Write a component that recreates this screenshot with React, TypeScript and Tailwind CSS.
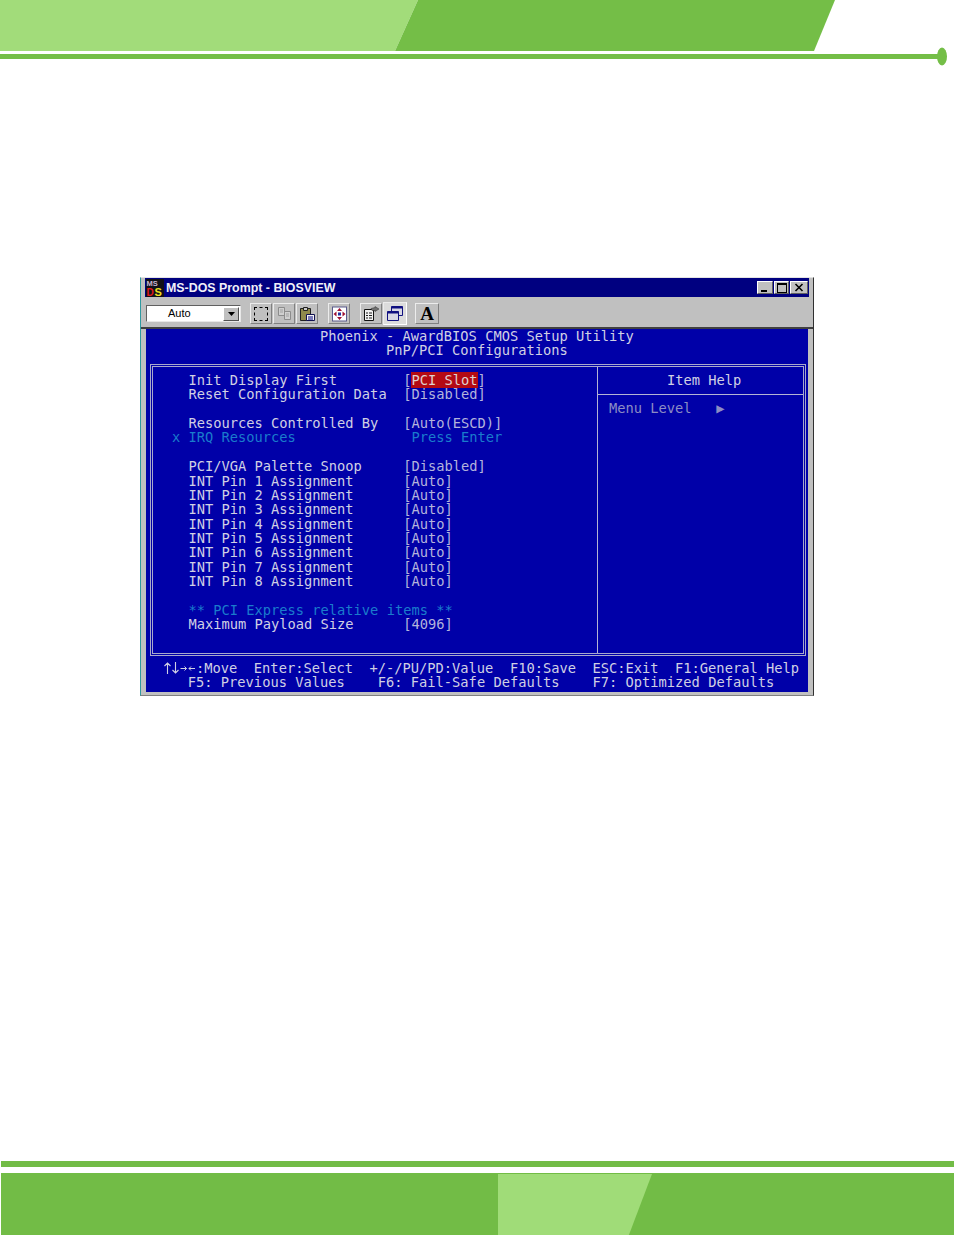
const MONO = "font-['DejaVu_Sans_Mono','Liberation_Mono',monospace]";

const rows = [
  { label: '  Init Display First', value: '[PCI Slot]', selected: true },
  { label: '  Reset Configuration Data', value: '[Disabled]' },
  {},
  { label: '  Resources Controlled By', value: '[Auto(ESCD)]' },
  { label: 'x IRQ Resources', value: ' Press Enter', dim: true },
  {},
  { label: '  PCI/VGA Palette Snoop', value: '[Disabled]' },
  { label: '  INT Pin 1 Assignment', value: '[Auto]' },
  { label: '  INT Pin 2 Assignment', value: '[Auto]' },
  { label: '  INT Pin 3 Assignment', value: '[Auto]' },
  { label: '  INT Pin 4 Assignment', value: '[Auto]' },
  { label: '  INT Pin 5 Assignment', value: '[Auto]' },
  { label: '  INT Pin 6 Assignment', value: '[Auto]' },
  { label: '  INT Pin 7 Assignment', value: '[Auto]' },
  { label: '  INT Pin 8 Assignment', value: '[Auto]' },
  {},
  { label: '  ** PCI Express relative items **', dim: true },
  { label: '  Maximum Payload Size', value: '[4096]' },
] as { label?: string; value?: string; selected?: boolean; dim?: boolean }[];

const Line = ({ children, className = '' }: { children?: React.ReactNode; className?: string }) => (
  <div className={`h-[14.4px] leading-[14.4px] whitespace-pre ${className}`}>{children}</div>
);

const SetupRow = ({ label = '', value, selected, dim }: (typeof rows)[number]) => {
  if (dim) {
    return (
      <Line className="text-[#1a7ccc]">
        {label.padEnd(28)}
        {value}
      </Line>
    );
  }
  return (
    <Line className="text-[#d0d0e4]">
      {label.padEnd(28)}
      {selected ? (
        <span className="text-[#b4b4dc]">
          [<span className="bg-[#b40a14] text-[#e0d0d0]">PCI Slot</span>]
        </span>
      ) : (
        <span className="text-[#b4b4dc]">{value}</span>
      )}
    </Line>
  );
};

const ToolButton = ({ children, className = '' }: { children: React.ReactNode; className?: string }) => (
  <div
    className={`flex h-[21px] items-center justify-center border border-t-[#ececec] border-l-[#ececec] border-r-[#808080] border-b-[#808080] ${className}`}
  >
    {children}
  </div>
);

const WinButton = ({ children, className = '' }: { children: React.ReactNode; className?: string }) => (
  <div
    className={`flex h-[13px] items-center justify-center border border-t-white border-l-white border-r-[#606060] border-b-[#606060] bg-[#c0c0c0] ${className}`}
  >
    {children}
  </div>
);

const DosIcon = () => (
  <svg width="18" height="18" viewBox="0 0 18 18" className="shrink-0">
    <rect width="18" height="18" fill="#101018" />
    <text x="0.5" y="7" fontSize="7.5" fontWeight="700" fontFamily="Liberation Sans" fill="#c8b4d0">
      MS
    </text>
    <text x="0.5" y="16.5" fontSize="10" fontWeight="700" fontFamily="Liberation Sans" fill="#e01818">
      D
    </text>
    <text x="8.5" y="16.5" fontSize="11" fontWeight="700" fontFamily="Liberation Sans" fill="#f0e020">
      S
    </text>
  </svg>
);

// up, down, right, left keys of the legend line, four text cells wide
const ArrowKeys = () => (
  <svg width="33" height="14" viewBox="0 0 33 14" className="inline-block align-top" fill="none" stroke="#d0d0e4">
    <path d="M4.5 13V2M1.5 5l3-3 3 3M12.5 1v11M9.5 9l3 3 3-3" strokeWidth="1.1" />
    <path d="M17.5 7.5h6M21.5 5.5l2 2-2 2M26 7.5h6M28 5.5l-2 2 2 2" strokeWidth="1" />
  </svg>
);

export default function App() {
  return (
    <div className="flex h-[1235px] w-[954px] flex-col overflow-hidden bg-white">
      {/* page banner */}
      <svg width="954" height="66" viewBox="0 0 954 66" className="block shrink-0">
        <polygon points="0,0 418,0 395,51 0,51" fill="#a2dc7a" />
        <polygon points="418,0 835,0 814,51 395,51" fill="#74be47" />
        <rect x="0" y="54" width="940" height="5" fill="#74be47" />
        <ellipse cx="942" cy="56.5" rx="5" ry="9" fill="#74be47" />
      </svg>

      {/* MS-DOS window */}
      <div className="mt-[211px] ml-[140px] flex h-[419px] w-[674px] shrink-0 flex-col border-t border-r border-b border-l border-t-[#e4e4e4] border-r-[#303030] border-b-[#808080] border-l-[#2f9aa0] bg-[#c0c0c0]">
        <div className="mr-[4px] ml-[4px] flex h-[19px] shrink-0 items-center bg-[#000080] pr-[1px] pl-[1px]">
          <DosIcon />
          <span className="mt-[1px] ml-[2px] font-['Liberation_Sans',sans-serif] text-[12.4px] font-bold text-[#f0f0f8]">
            MS-DOS Prompt - BIOSVIEW
          </span>
          <div className="ml-auto flex items-center">
            <WinButton className="w-[16px]">
              <span className="mt-[6px] mr-[2px] h-[2px] w-[6px] bg-black" />
            </WinButton>
            <WinButton className="ml-[1px] w-[15px]">
              <span className="h-[10px] w-[10px] border border-t-2 border-black" />
            </WinButton>
            <WinButton className="ml-[1px] w-[18px]">
              <svg width="10" height="9" viewBox="0 0 10 9">
                <path d="M1.5 1l7 7M8.5 1l-7 7" stroke="#000" strokeWidth="1.6" />
              </svg>
            </WinButton>
          </div>
        </div>

        <div className="flex h-[30px] shrink-0 items-center pt-[3px] pl-[5px]">
          <div className="flex h-[17px] w-[95px] items-center border border-t-[#606060] border-l-[#606060] border-r-[#e8e8e8] border-b-[#e8e8e8] bg-white">
            <span className="ml-[21px] font-['Liberation_Sans',sans-serif] text-[11px] text-black">Auto</span>
            <div className="mr-[1px] ml-auto flex h-[14px] w-[16px] items-center justify-center border border-t-white border-l-white border-r-[#505050] border-b-[#505050] bg-[#c0c0c0]">
              <svg width="7" height="4" viewBox="0 0 7 4">
                <path d="M0 0h7L3.5 4z" fill="#000" />
              </svg>
            </div>
          </div>
          <ToolButton className="ml-[9px] w-[22px]">
            <span className="h-[14px] w-[14px] border border-dashed border-black" />
          </ToolButton>
          <ToolButton className="ml-[1px] w-[22px]">
            <svg width="17" height="15" viewBox="0 0 17 15">
              <path d="M2.5 1.5h6v8h-6zM8.5 5.5h6v8h-6z" fill="#d0d0d0" stroke="#8c8c8c" />
              <path d="M4 4h3M4 6h3M10 8h3M10 10h3" stroke="#a0a0a0" />
            </svg>
          </ToolButton>
          <ToolButton className="ml-[1px] w-[22px]">
            <svg width="17" height="16" viewBox="0 0 17 16">
              <path d="M1.5 2.5h10v12h-10z" fill="#8f8a4c" stroke="#202020" />
              <path d="M4.5 1.5h4v3h-4z" fill="#c8c8c8" stroke="#202020" />
              <path d="M7.5 8.5h8v6h-8z" fill="#f4f4f4" stroke="#101050" />
              <path d="M9 11h5M9 13h5" stroke="#000080" />
            </svg>
          </ToolButton>
          <ToolButton className="ml-[10px] w-[22px]">
            <svg width="17" height="16" viewBox="0 0 17 16">
              <rect x="1.5" y="1" width="14" height="14" fill="#ffffff" stroke="#5a5a8c" />
              <path d="M8.5 2l-2.5 3h5zM8.5 14l-2.5-3h5zM2.5 8l3-2.5v5zM14.5 8l-3-2.5v5z" fill="#a01030" />
              <rect x="7" y="6.5" width="3" height="3" fill="#2030a0" />
            </svg>
          </ToolButton>
          <ToolButton className="ml-[10px] w-[22px]">
            <svg width="18" height="16" viewBox="0 0 18 16">
              <path d="M2.5 3.5h9v11h-9z" fill="#f0f0f0" stroke="#101010" />
              <path d="M4 7h2M7 7h3M4 9.5h2M7 9.5h3M4 12h2M7 12h3" stroke="#202020" />
              <path d="M9 2.5l4-1v-1l4 2.5-4 2.5v-1h-3z" fill="#707070" stroke="#303030" strokeWidth="0.5" />
            </svg>
          </ToolButton>
          <ToolButton className="ml-[1px] h-[23px] w-[24px] border-t-[#606060] border-r-white border-b-white border-l-[#606060] bg-[#dcdcdc]">
            <svg width="18" height="17" viewBox="0 0 18 17">
              <path d="M5.5 1.5h11v9h-11z" fill="#d8d8e4" stroke="#101080" />
              <path d="M5.5 1.5h11v2h-11z" fill="#101080" />
              <path d="M1.5 6.5h11v9h-11z" fill="#d8d8e4" stroke="#101080" />
              <path d="M1.5 6.5h11v2h-11z" fill="#101080" />
            </svg>
          </ToolButton>
          <ToolButton className="ml-[8px] w-[24px]">
            <span className="font-['Liberation_Serif',serif] text-[19px] leading-none font-bold text-black">A</span>
          </ToolButton>
        </div>

        <div className="h-[2px] shrink-0 bg-[#404040]" />

        {/* text mode screen, 80 x 25 cells */}
        <div
          className={`mr-[5px] ml-[5px] h-[363px] shrink-0 bg-[#0000a8] text-[13.72px] text-[#d0d0e4] ${MONO}`}
        >
          <div className="pl-[0.5px]">
            <Line>{' '.repeat(21)}Phoenix - AwardBIOS CMOS Setup Utility</Line>
            <Line>{' '.repeat(29)}PnP/PCI Configurations</Line>
          </div>

          <div className="mt-[6.2px] mr-[2px] ml-[4px] h-[292px] border border-[#a8a8cc] p-[1px]">
            <div className="flex h-full border border-[#a8a8cc]">
              <div className="w-[444px] shrink-0 pt-[5.8px] pl-[18.9px]">
                {rows.map((row, i) => (
                  <SetupRow key={i} {...row} />
                ))}
              </div>
              <div className="flex-1 border-l border-[#b4b4d4]">
                <div className="h-[28px] border-b border-[#b4b4d4] pt-[5.8px] pl-[69px]">
                  <Line>Item Help</Line>
                </div>
                <div className="pt-[6.5px] pl-[11px]">
                  <Line className="flex text-[#8c8cc4]">
                    {'Menu Level'}
                    <span className="ml-[24.75px] text-[14px]">▶</span>
                  </Line>
                </div>
              </div>
            </div>
          </div>

          <div className="mt-[4.9px] pl-[0.5px]">
            <Line>
              {'  '}
              <ArrowKeys />
              {':Move  Enter:Select  +/-/PU/PD:Value  F10:Save  ESC:Exit  F1:General Help'}
            </Line>
            <Line>{'     F5: Previous Values    F6: Fail-Safe Defaults    F7: Optimized Defaults'}</Line>
          </div>
        </div>
      </div>

      {/* page footer */}
      <div className="mt-auto ml-[1px] h-[6px] shrink-0 bg-[#72bc46]" />
      <div className="mt-[6px] ml-[1px] h-[62px] shrink-0 bg-[#72bc46] pt-[1px] pl-[497px]">
        <div className="h-full w-[154px] bg-[#a0dc78] [clip-path:polygon(0_0,100%_0,85%_100%,0_100%)]" />
      </div>
    </div>
  );
}
